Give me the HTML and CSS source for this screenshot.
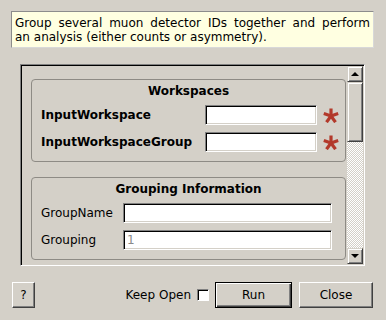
FILE: index.html
```html
<!DOCTYPE html>
<html>
<head>
<meta charset="utf-8">
<link rel="stylesheet" href="styles.css">
</head>
<body>
<div class="dialog">
  <p class="desc"><span class="desc-first">Group several muon detector IDs together and perform</span> an analysis (either counts or asymmetry).</p>
  <div class="scroll-frame">
    <div class="viewport">
      <section class="group">
        <div class="group-title">Workspaces</div>
        <div class="prop-row ws-row">
          <span class="prop-label bold">InputWorkspace</span>
          <span class="field"></span>
          <span class="req"><svg width="16" height="15" viewBox="0 0 16 15"><g stroke="#b3392b" stroke-width="3.2" stroke-linecap="butt"><line x1="8" y1="8" x2="8" y2="0.5"/><line x1="8" y1="8" x2="15.2" y2="5.6"/><line x1="8" y1="8" x2="12.5" y2="14.2"/><line x1="8" y1="8" x2="3.5" y2="14.2"/><line x1="8" y1="8" x2="0.8" y2="5.6"/></g></svg></span>
        </div>
        <div class="prop-row ws-row">
          <span class="prop-label bold">InputWorkspaceGroup</span>
          <span class="field"></span>
          <span class="req"><svg width="16" height="15" viewBox="0 0 16 15"><g stroke="#b3392b" stroke-width="3.2" stroke-linecap="butt"><line x1="8" y1="8" x2="8" y2="0.5"/><line x1="8" y1="8" x2="15.2" y2="5.6"/><line x1="8" y1="8" x2="12.5" y2="14.2"/><line x1="8" y1="8" x2="3.5" y2="14.2"/><line x1="8" y1="8" x2="0.8" y2="5.6"/></g></svg></span>
        </div>
      </section>
      <section class="group group-info">
        <div class="group-title">Grouping Information</div>
        <div class="prop-row gi-row">
          <span class="prop-label">GroupName</span>
          <span class="field"></span>
        </div>
        <div class="prop-row gi-row">
          <span class="prop-label">Grouping</span>
          <span class="field placeholder">1</span>
        </div>
      </section>
    </div>
    <div class="scrollbar">
      <div class="sb-btn"><span class="arrow up"></span></div>
      <div class="sb-handle"></div>
      <div class="sb-track"></div>
      <div class="sb-btn"><span class="arrow down"></span></div>
    </div>
  </div>
  <div class="buttons">
    <button class="btn help">?</button>
    <span class="spacer"></span>
    <span class="keep">Keep Open</span>
    <span class="check"></span>
    <button class="btn run">Run</button>
    <button class="btn close">Close</button>
  </div>
</div>
</body>
</html>
```

FILE: styles.css
```css
* { box-sizing: border-box; }
html, body {
  margin: 0;
  background: #d4d0c8;
  font-family: "DejaVu Sans", sans-serif;
  font-size: 12px;
  color: #000;
}
.dialog {
  width: 386px;
  height: 320px;
  padding: 11px 13px 0 11px;
  overflow: hidden;
}
.desc {
  margin: 0;
  width: 363px;
  height: 37px;
  padding: 4px 3px 3px 3px;
  line-height: 14px;
  text-align: justify;
  background: #ffffe1;
  border: 1px solid;
  border-color: #8c8c8c #d8d8d8 #d8d8d8 #8c8c8c;
}
.desc-first {
  display: block;
  text-align: justify;
  text-align-last: justify;
}
.scroll-frame {
  margin: 16px 0 0 9px;
  width: 345px;
  height: 202px;
  display: flex;
  padding: 1px;
  border: 1px solid;
  border-color: #808080 #fff #fff #808080;
  box-shadow: inset 1px 1px 0 #000, inset -1px -1px 0 #d4d0c8;
}
.viewport {
  flex: 1;
  min-width: 0;
  overflow: hidden;
  padding: 13px 1px 0 9px;
  display: flex;
  flex-direction: column;
  gap: 15px;
}
.group {
  flex: none;
  height: 83px;
  border: 1px solid #8e8b85;
  border-radius: 4px;
  padding: 3px 0 0 9px;
  display: flex;
  flex-direction: column;
  gap: 7px;
}
.group-title {
  text-align: center;
  font-weight: bold;
  line-height: 14px;
  height: 14px;
  margin: 1px 0 0 -9px;
}
.prop-row {
  display: grid;
  align-items: center;
  height: 20px;
}
.ws-row { grid-template-columns: 164px 112px 1fr; }
.gi-row { grid-template-columns: 82px 209px; }
.bold { font-weight: bold; }
.prop-label { line-height: 14px; }
.field {
  height: 20px;
  background: #fff;
  border: 1px solid;
  border-color: #808080 #fff #fff #808080;
  box-shadow: inset 1px 1px 0 #000, inset -1px -1px 0 #d4d0c8;
  padding: 2px 3px;
  line-height: 15px;
}
.placeholder { color: #8a8a8a; }
.req {
  display: flex;
  justify-content: center;
  align-items: center;
  padding-top: 1px;
}
.scrollbar {
  width: 16px;
  flex: none;
  display: flex;
  flex-direction: column;
}
.sb-btn, .sb-handle {
  border: 1px solid;
  border-color: #d4d0c8 #404040 #404040 #d4d0c8;
  box-shadow: inset 1px 1px 0 #fff, inset -1px -1px 0 #808080;
  background: #d4d0c8;
}
.sb-btn {
  height: 16px;
  flex: none;
  display: flex;
  align-items: center;
  justify-content: center;
}
.sb-handle { height: 60px; flex: none; }
.sb-track {
  flex: 1;
  background: repeating-conic-gradient(#fff 0 25%, #d4d0c8 0 50%) 0 0 / 2px 2px;
}
.arrow {
  width: 0;
  height: 0;
  border-left: 4px solid transparent;
  border-right: 4px solid transparent;
}
.arrow.up { border-bottom: 4px solid #000; margin-top: -1px; }
.arrow.down { border-top: 4px solid #000; }
.buttons {
  margin-top: 16px;
  height: 26px;
  display: flex;
  align-items: center;
  padding-left: 1px;
}
.btn {
  font-family: "DejaVu Sans", sans-serif;
  font-size: 12px;
  color: #000;
  height: 26px;
  padding: 0;
  background: #d4d0c8;
  border: 1px solid;
  border-color: #fff #404040 #404040 #fff;
  box-shadow: inset -1px -1px 0 #808080;
}
.help { width: 23px; }
.spacer { flex: 1; }
.keep { margin-right: 6px; }
.check {
  width: 12px;
  height: 12px;
  background: #fff;
  border: 1px solid;
  border-color: #808080 #fff #fff #808080;
  box-shadow: inset 1px 1px 0 #000;
  margin-right: 6px;
}
.run {
  width: 77px;
  margin-right: 7px;
  border: 1px solid #000;
  box-shadow: inset 1px 1px 0 #fff, inset -1px -1px 0 #404040, inset -2px -2px 0 #808080;
}
.close { width: 74px; }
```
